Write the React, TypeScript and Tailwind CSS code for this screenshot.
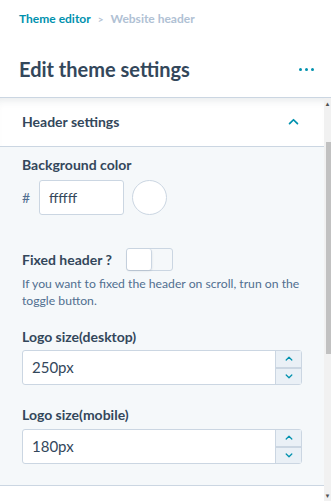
import React from 'react';

const font = { fontFamily: 'Lato, "Noto Sans", sans-serif' };

const Chevron = ({ up, className }: { up?: boolean; className?: string }) => (
  <svg viewBox="0 0 12 8" className={className} fill="none" stroke="currentColor" strokeWidth="2" strokeLinecap="round" strokeLinejoin="round">
    {up ? <path d="M1.5 6.5 6 2l4.5 4.5" /> : <path d="M1.5 1.5 6 6l4.5-4.5" />}
  </svg>
);

const NumberField = ({ value }: { value: string }) => (
  <div className="flex h-[35px] w-full rounded-[3px] border border-[#cbd6e2] bg-white">
    <div className="flex flex-1 items-center pl-[9px] text-[15px] text-[#33475b]">{value}</div>
    <div className="flex w-[26px] flex-col border-l border-[#cbd6e2] bg-[#eaf0f6] text-[#0091ae]">
      <div className="flex flex-1 items-center justify-center border-b-2 border-[#cbd6e2]">
        <Chevron up className="h-[5px] w-[8px]" />
      </div>
      <div className="flex flex-1 items-center justify-center">
        <Chevron className="h-[5px] w-[8px]" />
      </div>
    </div>
  </div>
);

export default function App() {
  return (
    <div className="flex h-[501px] w-[331px] flex-col overflow-hidden bg-white text-[#33475b]" style={font}>
      {/* Top header */}
      <div className="h-[98px] shrink-0 border-b border-[#cbd6e2] px-[19px]">
        <div className="flex items-center gap-[7px] pt-[10px] text-[12px] font-bold">
          <span className="text-[#0091ae]">Theme editor</span>
          <span className="text-[10px] text-[#b0c1d4]">&gt;</span>
          <span className="text-[#b0c1d4]">Website header</span>
        </div>
        <div className="mt-[26px] flex items-center justify-between">
          <h1 className="text-[20px] font-bold">Edit theme settings</h1>
          <div className="mr-[-2px] flex gap-[3px]">
            <span className="h-[3px] w-[3px] rounded-full bg-[#0091ae]" />
            <span className="h-[3px] w-[3px] rounded-full bg-[#0091ae]" />
            <span className="h-[3px] w-[3px] rounded-full bg-[#0091ae]" />
          </div>
        </div>
      </div>

      <div className="flex min-h-0 flex-1">
        <div className="flex min-w-0 flex-1 flex-col">
          {/* Section header */}
          <div className="flex h-[49px] shrink-0 items-center justify-between border-b border-[#cbd6e2] bg-white pb-[2px] pl-[22px] pr-[25px] shadow-[inset_0_8px_8px_-6px_rgba(45,62,80,0.12)]">
            <span className="text-[14px] font-bold">Header settings</span>
            <Chevron up className="h-[7px] w-[11px] text-[#0091ae]" />
          </div>

          {/* Panel */}
          <div className="border-b border-[#cbd6e2] bg-[#f5f8fa] px-[22px] pb-[21px] pt-[10px]">
            <div className="text-[14px] font-bold leading-4">Background color</div>
            <div className="mt-[7px] flex items-center">
              <span className="w-[17px] text-[14px] text-[#516f90]">#</span>
              <div className="flex h-[35px] w-[85px] items-center rounded-[3px] border border-[#cbd6e2] bg-white pl-[9px] text-[14px]">
                ffffff
              </div>
              <div className="ml-[8px] h-[35px] w-[35px] rounded-full border border-[#cbd6e2] bg-white" />
            </div>

            <div className="mt-[33px] flex items-center">
              <span className="text-[14px] font-bold leading-4">Fixed header ?</span>
              <div className="ml-[14px] flex h-[23px] w-[47px] rounded-[3px] border border-[#cbd6e2] bg-[#f5f8fa]">
                <div className="h-full w-[25px] rounded-[3px] border-r border-[#cbd6e2] bg-white shadow-[0_1px_2px_rgba(45,62,80,0.15)]" />
              </div>
            </div>
            <p className="mt-[4px] text-[12.2px] leading-[17px] text-[#516f90]">
              If you want to fixed the header on scroll, trun on the toggle button.
            </p>

            <div className="mt-[20px] text-[14px] font-bold leading-4">Logo size(desktop)</div>
            <div className="mt-[5px]">
              <NumberField value="250px" />
            </div>

            <div className="mt-[22px] text-[14px] font-bold leading-4">Logo size(mobile)</div>
            <div className="mt-[6px]">
              <NumberField value="180px" />
            </div>
          </div>
          <div className="flex-1 bg-white" />
        </div>

        {/* Scrollbar */}
        <div className="flex w-[7px] shrink-0 flex-col bg-[#f1f1f1]">
          <div className="flex h-[12px] items-center justify-center text-[6px] leading-none text-[#505050]">▲</div>
          <div className="ml-[2px] mt-[32px] h-[212px] bg-[#c1c1c1]" />
          <div className="flex-1" />
          <div className="flex h-[10px] items-center justify-center text-[6px] leading-none text-[#505050]">▼</div>
        </div>
      </div>
    </div>
  );
}
